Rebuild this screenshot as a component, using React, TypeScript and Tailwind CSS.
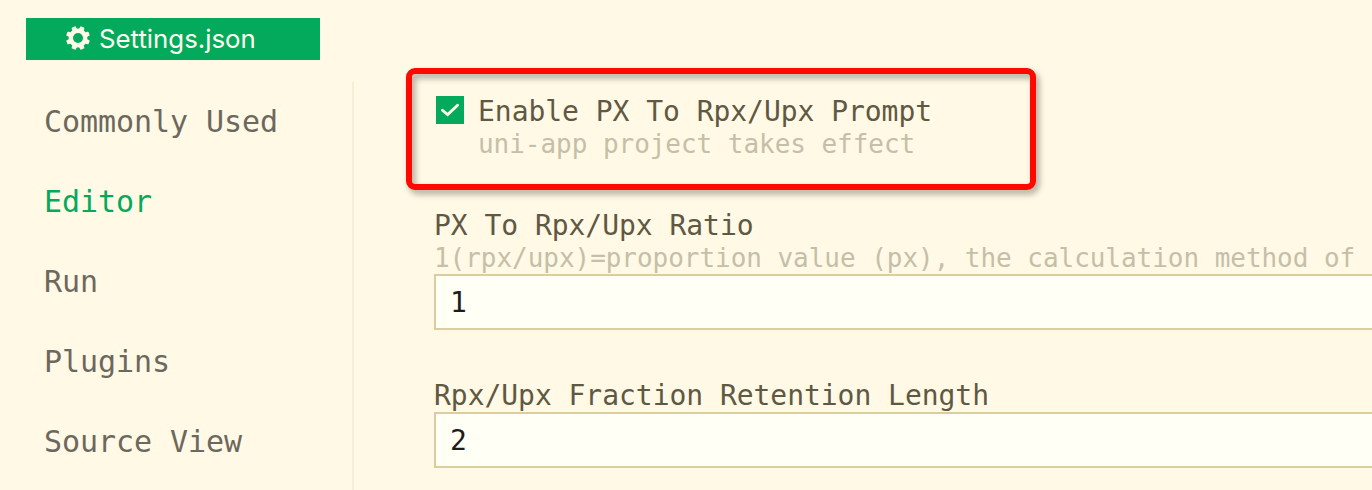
import React from "react";

const SECTIONS = ["Commonly Used", "Editor", "Run", "Plugins", "Source View"];

function GearIcon() {
  return (
    <svg className="h-6 w-6 shrink-0" viewBox="0 0 24 24" fill="none">
      <circle cx="12" cy="12" r="7.2" stroke="#fffbe8" strokeWidth="4.4" />
      <g fill="#fffbe8">
        {[22.5, 67.5, 112.5, 157.5, 202.5, 247.5, 292.5, 337.5].map((angle) => (
          <path
            key={angle}
            d="M9.3 4.5 L9.8 0.8 Q9.9 0 10.6 0 H13.4 Q14.1 0 14.2 0.8 L14.7 4.5 Z"
            transform={`rotate(${angle} 12 12)`}
          />
        ))}
      </g>
    </svg>
  );
}

function Label({ children }: { children: React.ReactNode }) {
  return (
    <div className="whitespace-pre text-[28px] leading-[33px] tracking-[-0.04px] text-[#5f5842]">{children}</div>
  );
}

function Hint({ children }: { children: React.ReactNode }) {
  return (
    <div className="whitespace-pre text-[26px] leading-8 tracking-[-0.04px] text-[#c5bfa8]">{children}</div>
  );
}

function ValueBox({ value }: { value: string }) {
  return (
    <div className="flex h-14 w-[1000px] items-center border-2 border-[#dccd9e] bg-[#fffff6] pl-3.5 text-[28px] leading-[33px] text-[#1c1c1c]">
      {value}
    </div>
  );
}

export default function App() {
  return (
    <div className="flex h-[490px] w-[1372px] flex-col overflow-hidden bg-[#fff9e6] [font-family:'DejaVu_Sans_Mono',monospace]">
      <header className="h-[82px] shrink-0 pl-[26px] pt-[18px]">
        <div className="flex h-[42px] w-[294px] items-center gap-[9px] bg-[#04aa5c] pl-10 text-[25.8px] text-[#fffdf0] [font-family:Inter,sans-serif]">
          <div className="pb-0.5">
            <GearIcon />
          </div>
          <span className="whitespace-nowrap leading-none">Settings.json</span>
        </div>
      </header>
      <div className="flex min-h-0 flex-1">
        <nav className="w-[354px] shrink-0 border-r-2 border-[#f5eed6] pl-11">
          {SECTIONS.map((name) => (
            <div
              key={name}
              className={
                name === "Editor"
                  ? "h-20 text-[30px] leading-[80px] tracking-[-0.06px] text-[#04aa5c]"
                  : "h-20 text-[30px] leading-[80px] tracking-[-0.06px] text-[#6d685d]"
              }
            >
              {name}
            </div>
          ))}
        </nav>
        <main className="flex min-w-0 flex-1 flex-col gap-[49px] overflow-visible pl-20 pt-[13px]">
          <section className="relative flex shrink-0 pl-0.5">
            <div className="absolute -left-7 -top-[27px] h-[122px] w-[630px] rounded-[9px] border-[6px] border-[#ff0800] [filter:drop-shadow(3px_4px_3px_rgba(60,60,50,0.45))]" />
            <div className="mr-3.5 mt-px flex h-7 w-7 items-center justify-center bg-[#04aa5c]">
              <svg className="h-7 w-7" viewBox="0 0 28 28" fill="none">
                <path d="M6.4 14.2 L11.6 18.6 L21.6 9.2" stroke="#fffbe8" strokeWidth="2.8" strokeLinecap="round" />
              </svg>
            </div>
            <div>
              <Label>Enable PX To Rpx/Upx Prompt</Label>
              <Hint>uni-app project takes effect</Hint>
            </div>
          </section>
          <section className="shrink-0">
            <Label>PX To Rpx/Upx Ratio</Label>
            <Hint>1(rpx/upx)=proportion value (px), the calculation method of</Hint>
            <ValueBox value="1" />
          </section>
          <section className="shrink-0">
            <Label>Rpx/Upx Fraction Retention Length</Label>
            <ValueBox value="2" />
          </section>
        </main>
      </div>
    </div>
  );
}
